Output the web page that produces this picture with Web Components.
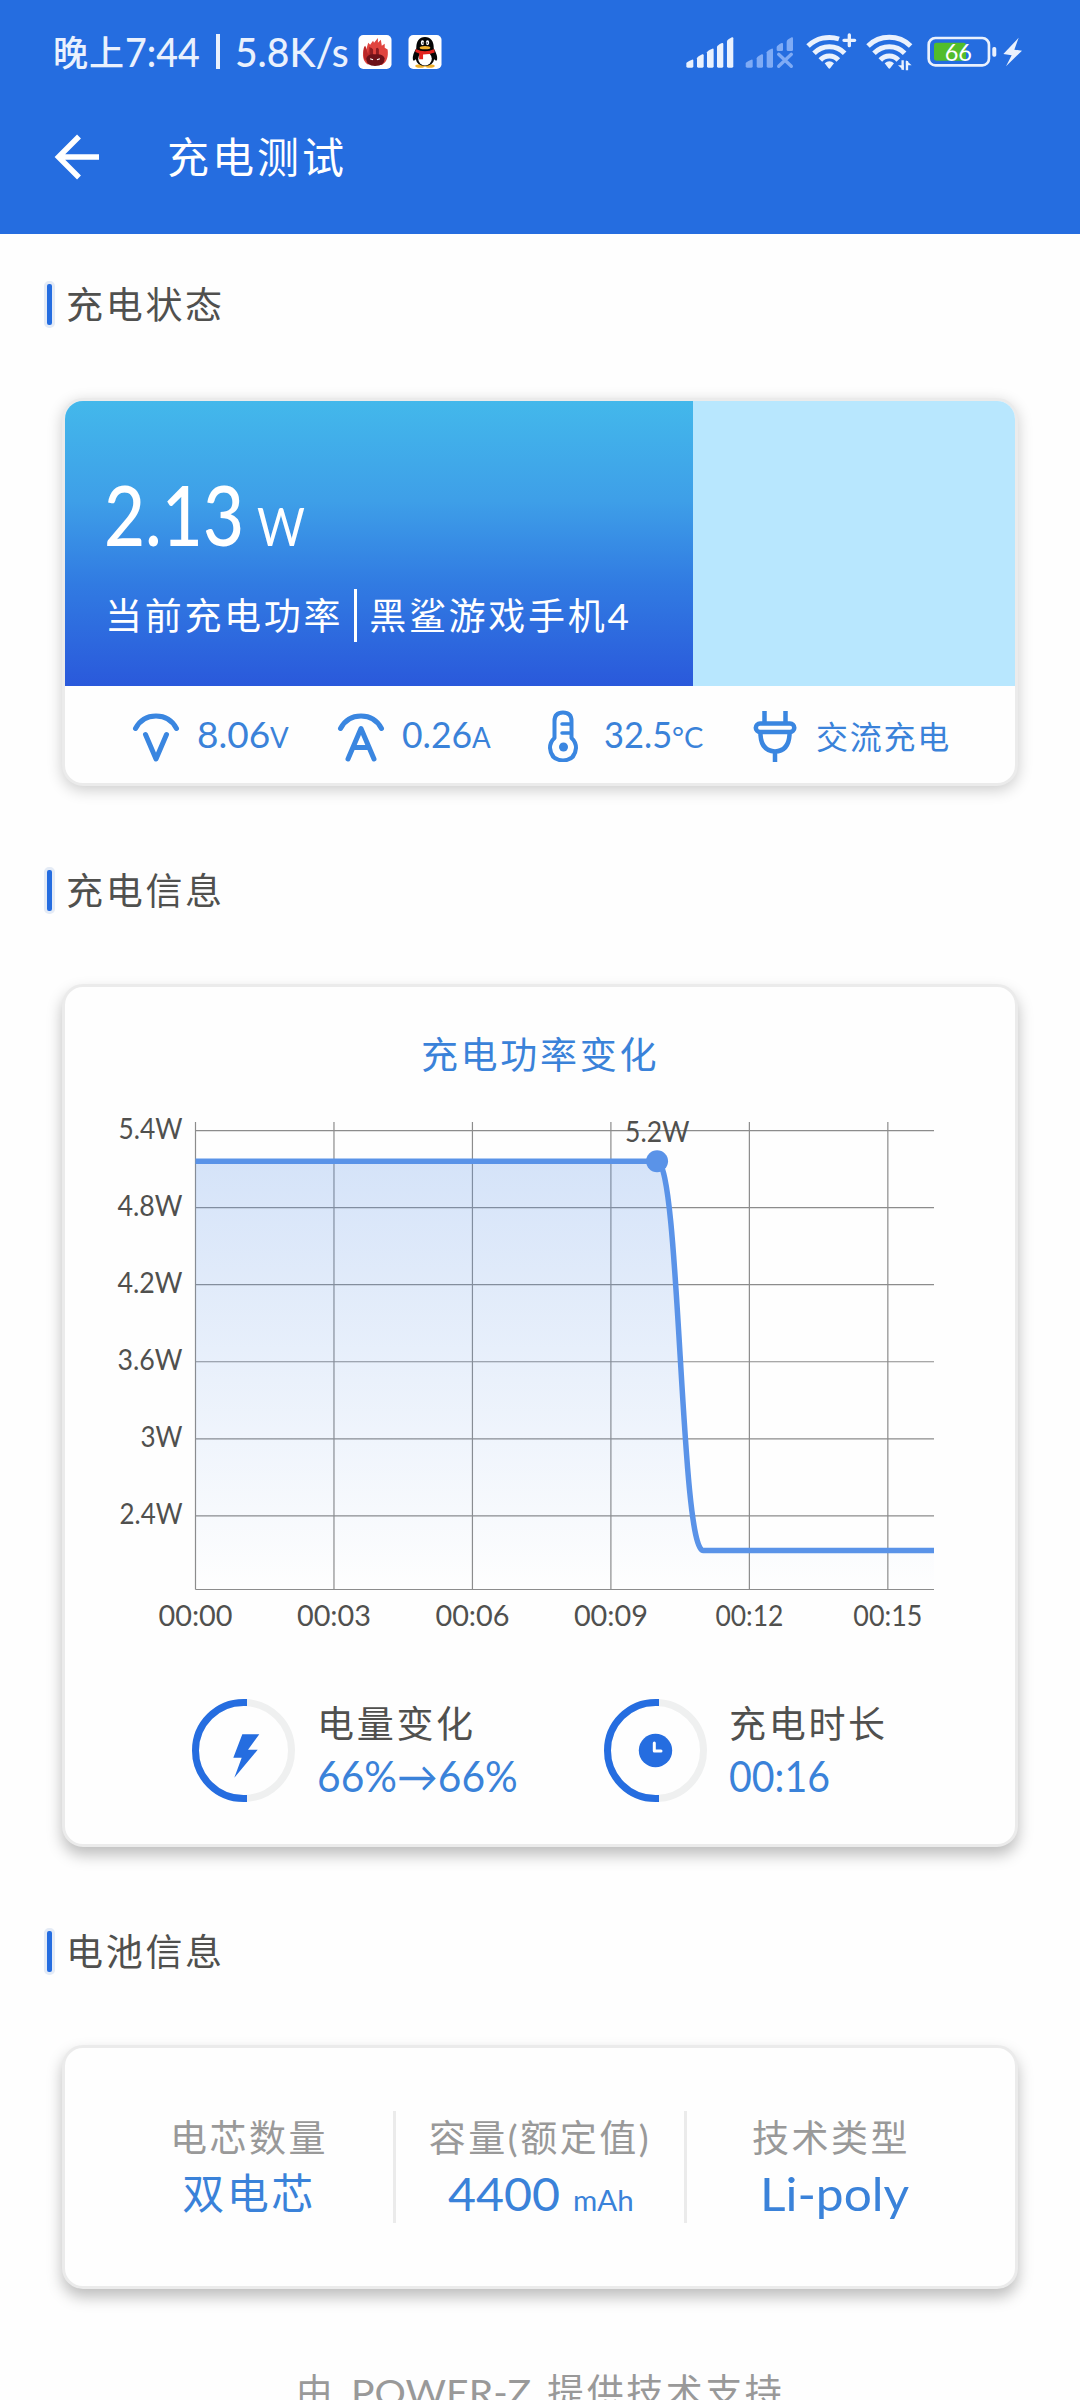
<!DOCTYPE html>
<html lang="zh-CN">
<head>
<meta charset="UTF-8">
<title>充电测试</title>
<style>
  body {
    margin: 0;
    width: 1080px;
    height: 2400px;
    overflow: hidden;
    background: #fefefe;
    color: #50504e;
    font-family: Lato, "Noto Sans CJK SC", sans-serif;
    font-size: 37px;
    font-weight: 400;
  }
</style>
</head>
<body>
<charge-page></charge-page>

<script>
// Shared base: every element renders its markup into an open shadow root
class BaseElement extends HTMLElement {
  constructor() {
    super();
    this.attachShadow({ mode: "open" });
  }

  connectedCallback() {
    this.shadowRoot.innerHTML = this.render();
  }
}

class StatusBar extends BaseElement {
  // one wifi fan around x = cx; "open" cuts the outer arc for the plus sign
  wifi(cx, open) {
    const end = open ? `A92 92 0 0 1 ${cx + 29} 58` : `A92 92 0 0 1 ${cx + 64} 79`;
    return `
      <g fill="none" stroke="#eaf1fd" stroke-width="15">
        <path d="M${cx - 64} 79 ${end}"/>
        <path d="M${cx - 46} 101 A64 64 0 0 1 ${cx + 46} 101"/>
        <path d="M${cx - 27} 121 A37 37 0 0 1 ${cx + 27} 121"/>
      </g>
      <path d="M${cx - 14} 131 Q${cx} 119 ${cx + 14} 131 L${cx + 3} 145 Q${cx} 149 ${cx - 3} 145Z" fill="#eaf1fd"/>`;
  }

  render() {
    return `
    <style>
      :host {
        display: flex;
        align-items: center;
        justify-content: space-between;
        height: 105px;
        padding: 0 57px 0 53px;
        box-sizing: border-box;
        color: #eaf1fd;
        line-height: 50px;
      }
      div { display: flex; align-items: center; }
      .left { padding-bottom: 2px; }
      .cjk { font-size: 35px; font-weight: 500; letter-spacing: 1px; }
      .num { font-size: 40px; font-weight: 500; }
      .sep { width: 4px; height: 35px; background: #eaf1fd; margin: 0 15px 0 16px; }
      .app { margin-left: 9px; }
      .app + .app { margin-left: 16px; }
      svg { display: block; }
      svg text { font: 400 72px Lato, sans-serif; }
    </style>
    <div class="left">
      <span class="cjk">晚上</span>
      <fit-text class="num" w="75">7:44</fit-text>
      <span class="sep"></span>
      <fit-text class="num" w="114">5.8K/s</fit-text>
      <svg class="app" width="34" height="34" viewBox="0 0 34 35">
        <rect width="34" height="35" rx="5" fill="#fff"/>
        <path d="M9 30 C3 25 4 17 7 12 L8 15 L10 8 L12 10 L15 6 L16 8 L20 3 L20 8 L23 5 L24 11 L27 9 L27 13 L30 15 C31 23 29 28 24 31Z" fill="#e0443e"/>
        <path d="M5 18 Q5 12 7 11 L10 20 L11 12 L13 13 L14 20 L9 27 L6 25Z" fill="#b92728"/>
        <path d="M12 22 V14 Q13 12 15 15 V20 H18 V14 Q20 12 21 15 V22Z" fill="#8d1c21"/>
        <path d="M8 24 Q10 19 17 20 Q25 19 27 24 Q27 32 17 32 Q8 32 8 24Z" fill="#6d1119"/>
        <path d="M12 24.500 l3 1 M22 24.500 l-3 1" stroke="#fff" stroke-width="1.200"/>
      </svg>
      <svg class="app" width="34" height="34" viewBox="0 0 34 35">
        <rect width="34" height="35" rx="5" fill="#fff"/>
        <ellipse cx="12" cy="32" rx="5" ry="1.800" fill="#efb02c"/>
        <ellipse cx="22" cy="32" rx="5" ry="1.800" fill="#efb02c"/>
        <path d="M8 14 Q8 2 17 2 Q26 2 26 14 Q30 21 29.500 25 Q29 28 26.500 25 Q25 32 17 32 Q9 32 7.500 25 Q5 28 4.500 25 Q4 20 8 14Z" fill="#050505"/>
        <ellipse cx="17" cy="24.500" rx="7" ry="7" fill="#fff"/>
        <ellipse cx="14.400" cy="8" rx="1.700" ry="2.500" fill="#fff"/>
        <ellipse cx="19.600" cy="8" rx="1.700" ry="2.500" fill="#fff"/>
        <circle cx="14.900" cy="8.200" r=".8"/><circle cx="19.200" cy="8.200" r=".8"/>
        <ellipse cx="17" cy="13" rx="5.500" ry="1.700" fill="#efb02c"/>
        <path d="M7.500 14.500 Q17 19 26.500 14.500 L27 18 Q22 20 15 20 V25 H11 V19 Q8 18 7 17.500Z" fill="#e2231f"/>
      </svg>
    </div>
    <div>
      <svg width="59.300" height="38.300" viewBox="76 40 178 115" fill="#eaf1fd">
        <path d="M77 140 V130 Q78 127 94 120 Q98 119 98 123 V140 Q98 144 94 144 H81 Q77 144 77 140Z"/>
        <path d="M109 140 V116 Q109 112 125 104 Q129 103 129 107 V140 Q129 144 125 144 H113 Q109 144 109 140Z"/>
        <path d="M139 140 V98 Q139 94 155 87 Q159 86 159 90 V140 Q159 144 155 144 H143 Q139 144 139 140Z"/>
        <path d="M169 140 V82 Q169 77 184 70 Q188 69 188 73 V140 Q188 144 184 144 H173 Q169 144 169 140Z"/>
        <path d="M199 140 V66 Q199 60 214 53 Q218 52 218 56 V140 Q218 144 214 144 H203 Q199 144 199 140Z"/>
      </svg>
      <svg width="60.700" height="38.300" viewBox="254 40 182 115" fill="#7fabf5">
        <path d="M256 140 V130 Q257 127 273 120 Q277 119 277 123 V140 Q277 144 273 144 H260 Q256 144 256 140Z"/>
        <path d="M289 140 V116 Q289 112 304 104 Q308 103 308 107 V140 Q308 144 304 144 H293 Q289 144 289 140Z"/>
        <path d="M319 140 V98 Q319 94 334 87 Q338 86 338 90 V140 Q338 144 334 144 H323 Q319 144 319 140Z"/>
        <path d="M349 90 V82 Q350 77 364 70 Q368 69 368 73 V90 Q368 94 364 94 H353 Q349 94 349 90Z"/>
        <path d="M379 90 V66 Q379 60 394 53 Q398 52 398 56 V90 Q398 94 394 94 H383 Q379 94 379 90Z"/>
        <path d="M355 104 L393 140 M393 104 L355 140" stroke="#7fabf5" stroke-width="10" stroke-linecap="round"/>
      </svg>
      <svg width="60" height="38.300" viewBox="436 40 180 115">
        ${this.wifi(506, true)}
        <path d="M566 46 V78 M550 62 H582" stroke="#eaf1fd" stroke-width="10" stroke-linecap="round"/>
      </svg>
      <svg width="61.300" height="38.300" viewBox="616 40 184 115">
        ${this.wifi(686, false)}
        <path d="M726 122 V150 M739 124 V152" stroke="#eaf1fd" stroke-width="7"/>
        <path d="M729 152 L712 137 H729Z M736 122 L753 137 H736Z" fill="#eaf1fd"/>
      </svg>
      <svg width="75.300" height="38.300" viewBox="800 40 226 115">
        <rect x="821" y="69" width="96" height="54" rx="7" fill="#52bd2b"/>
        <rect x="805" y="55" width="181" height="82" rx="20" fill="none" stroke="#eaf1fd" stroke-width="8"/>
        <rect x="996" y="82" width="12" height="29" rx="5" fill="#eaf1fd"/>
        <text x="853" y="123" textLength="82" lengthAdjust="spacingAndGlyphs" fill="#fff">66</text>
      </svg>
      <svg width="20.700" height="38.300" viewBox="1026 40 62 115">
        <path d="M1076 54 L1030 103 L1055 107 L1038 140 L1086 93 L1063 90Z" fill="#eaf1fd"/>
      </svg>
    </div>`;
  }
}

class AppHeader extends BaseElement {
  render() {
    return `
    <style>
      :host { display: block; height: 234px; background: #256de0; }
      nav {
        display: flex;
        align-items: center;
        gap: 67px;
        height: 104px;
        padding-left: 54px;
        color: #fff;
        font-size: 42px;
        line-height: 50px;
        letter-spacing: 3px;
      }
      svg { display: block; }
    </style>
    <status-bar></status-bar>
    <nav>
      <svg width="46" height="46" viewBox="0 0 46 46" fill="none" stroke="#fff" stroke-width="5.500">
        <path d="M25 2.500 L4.500 23 L25 43.500 M5 23 H45"/>
      </svg>
      <span><slot></slot></span>
    </nav>`;
  }
}

class SectionTitle extends BaseElement {
  render() {
    return `
    <style>
      :host {
        display: flex;
        align-items: center;
        height: 47px;
        padding-left: 44px;
        line-height: 48px;
        letter-spacing: 2.700px;
      }
      i {
        width: 5px;
        height: 41px;
        margin-right: 11px;
        border: 3px solid #e4ebf6;
        border-radius: 5px;
        background: #256de0;
      }
    </style>
    <i></i><slot></slot>`;
  }
}

class CardBox extends BaseElement {
  render() {
    return `
    <style>
      :host {
        display: block;
        box-sizing: border-box;
        margin: 70px 62px 81px;
        border: 3px solid #ebebeb;
        border-radius: 21px;
        background: #fefefe;
        overflow: hidden;
        box-shadow: 0 var(--drop, 8px) 15px rgba(0, 0, 0, var(--shade, .26));
      }
    </style>
    <slot></slot>`;
  }
}

// Text squeezed or stretched to the width given in "w"
class FitText extends BaseElement {
  connectedCallback() {
    super.connectedCallback();
    const inner = this.shadowRoot.querySelector("span");
    const width = Number(this.getAttribute("w"));
    this.style.width = width + "px";
    inner.style.transform = `scaleX(${width / inner.offsetWidth})`;
  }

  render() {
    return `
    <style>
      :host { display: inline-block; white-space: nowrap; }
      span { display: inline-block; transform-origin: 0 50%; }
    </style>
    <span><slot></slot></span>`;
  }
}

class PowerPanel extends BaseElement {
  render() {
    return `
    <style>
      :host { display: flex; height: 285px; background: #b8e7fe; color: #fff; }
      .level {
        width: ${this.getAttribute("level")}%;
        box-sizing: border-box;
        padding: 63px 0 0 40px;
        background: linear-gradient(#43b8eb 0%, #3e9fe8 35%, #317be2 64%, #2a59db 100%);
      }
      .power { height: 100px; line-height: 100px; font-size: 83px; font-weight: 500; margin-left: -1px; }
      .power small { font-size: 53px; font-weight: 400; margin-left: 13px; }
      .device {
        display: flex;
        margin-top: 25px;
        line-height: 54px;
        height: 53px;
        letter-spacing: 2.700px;
        white-space: nowrap;
      }
      .device i { width: 3px; margin: 0 12px 0 11px; background: #fff; }
    </style>
    <div class="level">
      <div class="power"><fit-text w="140">2.13</fit-text><small><fit-text w="48">W</fit-text></small></div>
      <div class="device"><span>当前充电功率</span><i></i><span>黑鲨游戏手机4</span></div>
    </div>`;
  }
}

const METRIC_ICONS = {
  volt: `<path d="M5.500 18.500 Q12 6 26 6 Q40 6 46.500 18.500" stroke-width="5"/><path d="M15.500 24.500 L26 49 L36.500 24.500" stroke-width="5"/>`,
  amp: `<path d="M5.500 18.500 Q12 6 26 6 Q40 6 46.500 18.500" stroke-width="5"/><path d="M13 49 L26 18.500 L39 49 M18 37.500 H34" stroke-width="5"/>`,
  temp: `<path d="M17.500 28 V11 Q17.500 2.500 26 2.500 Q34.500 2.500 34.500 11 V28 Q39 32 39 38 Q38 50 26 50.500 Q14 50 13 38 Q13 32 17.500 28Z" stroke-width="4"/>
    <path d="M25 14 H34 M25 23 H34" stroke-width="3.500"/><circle cx="26.500" cy="37" r="4.500" fill="currentColor" stroke="none"/>`,
  plug: `<g stroke-linecap="butt" stroke-width="4.500"><path d="M15.500 1 V13 M36.500 1 V13 M26 41 V52"/>
    <rect x="6.800" y="13.500" width="38.500" height="8.500" rx="4.200"/>
    <path d="M11.500 22 V25 Q12.500 41 26 41.500 Q39.500 41 40.500 25 V22"/></g>`
};

class MetricItem extends BaseElement {
  render() {
    return `
    <style>
      :host { display: flex; align-items: center; gap: 15px; color: #3a82d9; font-size: 36px; line-height: 50px; }
      svg { display: block; flex: none; color: #3a86e0; }
    </style>
    <svg width="52" height="52" viewBox="0 0 52 52" fill="none" stroke="currentColor" stroke-linecap="round" stroke-linejoin="round">
      ${METRIC_ICONS[this.getAttribute("icon")]}
    </svg>
    <span><slot></slot></span>`;
  }
}

class PowerChart extends BaseElement {
  render() {
    const left = 130.5, right = 869, top = 22, bottom = 489.5;
    const high = 61.3, low = 450.6;
    const step = (right - left) / 16;
    const x10 = left + step * 10, x11 = left + step * 11, mid = (x10 + x11) / 2;
    const curve = `M${left} ${high} H${x10} C${mid} ${high} ${mid} ${low} ${x11} ${low} H${right}`;

    let grid = `M${left} ${bottom} H${right}`;
    let labels = "";
    [["5.4W", 64], ["4.8W", 65], ["4.2W", 65], ["3.6W", 65], ["3W", 42], ["2.4W", 63]].forEach(([t, w], i) => {
      const y = 30.6 + i * 77.05;
      grid += `M${left} ${y} H${right}`;
      labels += `<text x="${117.5 - w}" y="${y + 8.2}" textLength="${w}" lengthAdjust="spacingAndGlyphs">${t}</text>`;
    });
    [["00:00", 74], ["00:03", 74], ["00:06", 74], ["00:09", 74], ["00:12", 68], ["00:15", 69]].forEach(([t, w], i) => {
      const x = left + i * 3 * step;
      grid += `M${x} ${top} V${bottom}`;
      labels += `<text x="${x - w / 2}" y="526" textLength="${w}" lengthAdjust="spacingAndGlyphs">${t}</text>`;
    });

    return `
    <style>
      :host { display: block; height: 540px; }
      svg { display: block; }
      text { font: 400 29px Lato, sans-serif; fill: #50504e; }
    </style>
    <svg width="950" height="540" viewBox="0 0 950 540" fill="none">
      <defs>
        <linearGradient id="area" x1="0" y1="0" x2="0" y2="1">
          <stop offset="0" stop-color="#5a93e8" stop-opacity=".25"/>
          <stop offset="1" stop-color="#5a93e8" stop-opacity="0"/>
        </linearGradient>
      </defs>
      <path d="${grid}" stroke="#8c8c8c" stroke-width="1.200"/>
      <path d="${curve} V${bottom} H${left}Z" fill="url(#area)"/>
      <path d="${curve}" stroke="#5a93e8" stroke-width="5.500"/>
      <circle cx="${x10}" cy="${high}" r="11" fill="#5a93e8"/>
      <text x="560" y="41.500" textLength="64.500" lengthAdjust="spacingAndGlyphs">5.2W</text>
      ${labels}
    </svg>`;
  }
}

const RING_ICONS = {
  bolt: `<path d="M50.300 35.300 H67.300 L56 50.700 H65.700 L42.300 78.700 L49.700 58.700 H41.300Z" fill="#256de0"/>`,
  clock: `<circle cx="51.500" cy="51.500" r="16.700" fill="#256de0"/><path d="M50.300 44 V52 H57" stroke="#fff" stroke-width="3" stroke-linecap="round" stroke-linejoin="round"/>`
};

class RingStat extends BaseElement {
  render() {
    return `
    <style>
      :host { display: flex; gap: 22px; height: 103px; letter-spacing: 2.700px; }
      svg { display: block; flex: none; }
      .label { line-height: 50px; white-space: nowrap; }
      .value { line-height: 54px; font-size: 42px; letter-spacing: 0; color: #3a82d9; }
    </style>
    <svg width="103" height="103" viewBox="0 0 103 103" fill="none">
      <circle cx="51.500" cy="51.500" r="48" stroke="#eff0f0" stroke-width="7"/>
      <path d="M55 3.500 H51.500 A48 48 0 0 0 51.500 99.500 H55" stroke="#256de0" stroke-width="7"/>
      ${RING_ICONS[this.getAttribute("icon")]}
    </svg>
    <div>
      <div class="label">${this.getAttribute("label")}</div>
      <div class="value"><slot></slot></div>
    </div>`;
  }
}

class InfoCell extends BaseElement {
  render() {
    return `
    <style>
      :host {
        display: block;
        width: 288px;
        height: 110px;
        padding-top: 2px;
        text-align: center;
        color: #999;
        letter-spacing: 2.500px;
        white-space: nowrap;
      }
      :host(:not(:last-child)) { border-right: 3px solid #ebebeb; }
      .label { line-height: 50px; }
      .value { line-height: 61px; font-size: 42px; color: #3a82d9; }
    </style>
    <div class="label">${this.getAttribute("label")}</div>
    <div class="value"><slot></slot></div>`;
  }
}

class ChargePage extends BaseElement {
  render() {
    return `
    <style>
      :host { display: block; }
      main { padding-top: 47px; }
      .first { --drop: 4px; --shade: .2; }
      .metrics {
        display: flex;
        justify-content: center;
        align-items: center;
        gap: 46px;
        height: 97px;
        padding: 2px 0 0 1px;
        box-sizing: border-box;
      }
      .metrics small { font-size: 29px; }
      .metrics .cjk { font-size: 32px; letter-spacing: 1.800px; }
      h2 {
        margin: 43px 0 20px;
        text-align: center;
        font: inherit;
        line-height: 50px;
        letter-spacing: 2.700px;
        color: #3a82d9;
      }
      .rings { display: grid; grid-template-columns: 412px 1fr; padding: 59px 0 42px 127px; }
      .cells { display: flex; padding: 63px 0 63px 40px; }
      .cells fit-text { letter-spacing: 0; }
      .num { font-size: 47px; }
      .unit { font-size: 29px; margin-left: 14px; }
      footer {
        margin-top: -3px;
        display: flex;
        justify-content: center;
        gap: 16px;
        line-height: 50px;
        letter-spacing: 2.500px;
        color: #999;
      }
      footer fit-text { letter-spacing: 0; }
    </style>
    <app-header>充电测试</app-header>
    <main>
      <section-title>充电状态</section-title>
      <card-box class="first">
        <power-panel level="66.1"></power-panel>
        <div class="metrics">
          <metric-item icon="volt"><fit-text w="73">8.06</fit-text><small><fit-text w="19">V</fit-text></small></metric-item>
          <metric-item icon="amp"><fit-text w="70">0.26</fit-text><small><fit-text w="19">A</fit-text></small></metric-item>
          <metric-item icon="temp"><fit-text w="68">32.5</fit-text><small><fit-text w="31">°C</fit-text></small></metric-item>
          <metric-item icon="plug"><span class="cjk">交流充电</span></metric-item>
        </div>
      </card-box>

      <section-title>充电信息</section-title>
      <card-box>
        <h2>充电功率变化</h2>
        <power-chart></power-chart>
        <div class="rings">
          <ring-stat icon="bolt" label="电量变化"><fit-text w="201">66%→66%</fit-text></ring-stat>
          <ring-stat icon="clock" label="充电时长"><fit-text w="101">00:16</fit-text></ring-stat>
        </div>
      </card-box>

      <section-title>电池信息</section-title>
      <card-box>
        <div class="cells">
          <info-cell label="电芯数量">双电芯</info-cell>
          <info-cell label="容量(额定值)"><fit-text class="num" w="112">4400</fit-text><fit-text class="unit" w="61">mAh</fit-text></info-cell>
          <info-cell label="技术类型"><fit-text class="num" w="149">Li-poly</fit-text></info-cell>
        </div>
      </card-box>
      <footer><span>由</span><fit-text w="180">POWER-Z</fit-text><span>提供技术支持</span></footer>
    </main>`;
  }
}

customElements.define("charge-page", ChargePage);
customElements.define("app-header", AppHeader);
customElements.define("status-bar", StatusBar);
customElements.define("section-title", SectionTitle);
customElements.define("card-box", CardBox);
customElements.define("power-panel", PowerPanel);
customElements.define("metric-item", MetricItem);
customElements.define("power-chart", PowerChart);
customElements.define("ring-stat", RingStat);
customElements.define("info-cell", InfoCell);
customElements.define("fit-text", FitText);
</script>
</body>
</html>
